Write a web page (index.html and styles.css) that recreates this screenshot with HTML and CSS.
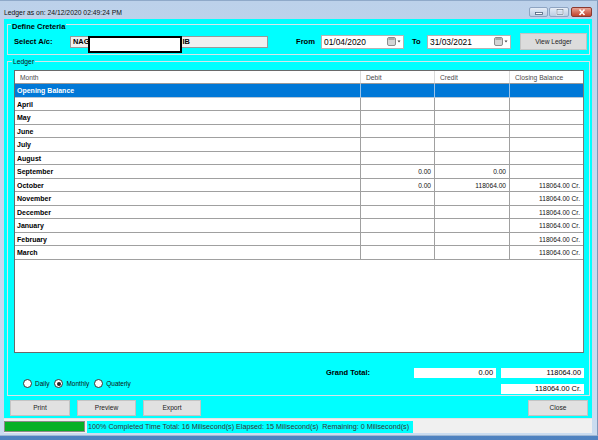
FILE: index.html
```html
<!DOCTYPE html>
<html>
<head>
<meta charset="utf-8">
<link rel="stylesheet" href="styles.css">
</head>
<body>
<div class="window">
  <div class="titlebar">
    <span class="title">Ledger as on: 24/12/2020 02:49:24 PM</span>
    <div class="controls">
      <span class="cbtn min"><svg width="18" height="9" viewBox="0 0 18 9"><rect x="5.5" y="4.5" width="7" height="2" fill="#fff" stroke="#4a5f7a" stroke-width="0.8"/></svg></span>
      <span class="cbtn max"><svg width="20" height="9" viewBox="0 0 20 9"><rect x="7" y="1.5" width="6" height="5" fill="none" stroke="#fff" stroke-width="1.6"/><rect x="7" y="1.5" width="6" height="5" fill="none" stroke="#4a5f7a" stroke-width="0.6"/></svg></span>
      <span class="cbtn close"><svg width="20" height="9" viewBox="0 0 20 9"><path d="M7.5 1.5 L12.5 7 M12.5 1.5 L7.5 7" stroke="#fff" stroke-width="1.6"/></svg></span>
    </div>
  </div>
  <div class="client">
    <div class="group criteria">
      <span class="legend bold">Define Creteria</span>
      <div class="crow">
        <span class="lbl sel">Select A/c:</span>
        <div class="acbox"><span class="ac1">NAG</span><span class="ac2">IB</span><span class="redact"></span></div>
        <span class="lbl from">From</span>
        <div class="date"><span class="dtext">01/04/2020</span><svg class="cal" width="15" height="9" viewBox="0 0 15 9"><rect x="0.5" y="0.5" width="8" height="8" rx="1.5" fill="#d4d4d4" stroke="#8c8c8c"/><rect x="1.5" y="1" width="6" height="2" fill="#a8a8a8"/><path d="M10.5 3.5 L13.5 3.5 L12 5.5 Z" fill="#444"/></svg></div>
        <span class="lbl to">To</span>
        <div class="date d2"><span class="dtext">31/03/2021</span><svg class="cal" width="15" height="9" viewBox="0 0 15 9"><rect x="0.5" y="0.5" width="8" height="8" rx="1.5" fill="#d4d4d4" stroke="#8c8c8c"/><rect x="1.5" y="1" width="6" height="2" fill="#a8a8a8"/><path d="M10.5 3.5 L13.5 3.5 L12 5.5 Z" fill="#444"/></svg></div>
        <button class="btn view">View Ledger</button>
      </div>
    </div>

    <div class="group ledger">
      <span class="legend">Ledger</span>
      <div class="grid">
        <div class="row head"><div class="c">Month</div><div class="c">Debit</div><div class="c">Credit</div><div class="c">Closing Balance</div></div>
        <div class="row sel"><div class="c m">Opening Balance</div><div class="c n"></div><div class="c n"></div><div class="c n"></div></div>
        <div class="row"><div class="c m">April</div><div class="c n"></div><div class="c n"></div><div class="c n"></div></div>
        <div class="row"><div class="c m">May</div><div class="c n"></div><div class="c n"></div><div class="c n"></div></div>
        <div class="row"><div class="c m">June</div><div class="c n"></div><div class="c n"></div><div class="c n"></div></div>
        <div class="row"><div class="c m">July</div><div class="c n"></div><div class="c n"></div><div class="c n"></div></div>
        <div class="row"><div class="c m">August</div><div class="c n"></div><div class="c n"></div><div class="c n"></div></div>
        <div class="row"><div class="c m">September</div><div class="c n">0.00</div><div class="c n">0.00</div><div class="c n"></div></div>
        <div class="row"><div class="c m">October</div><div class="c n">0.00</div><div class="c n">118064.00</div><div class="c n">118064.00 Cr.</div></div>
        <div class="row"><div class="c m">November</div><div class="c n"></div><div class="c n"></div><div class="c n">118064.00 Cr.</div></div>
        <div class="row"><div class="c m">December</div><div class="c n"></div><div class="c n"></div><div class="c n">118064.00 Cr.</div></div>
        <div class="row"><div class="c m">January</div><div class="c n"></div><div class="c n"></div><div class="c n">118064.00 Cr.</div></div>
        <div class="row"><div class="c m">February</div><div class="c n"></div><div class="c n"></div><div class="c n">118064.00 Cr.</div></div>
        <div class="row"><div class="c m">March</div><div class="c n"></div><div class="c n"></div><div class="c n">118064.00 Cr.</div></div>
      </div>
      <div class="footer">
        <div class="radios">
          <span class="ropt"><span class="radio"></span>Daily</span>
          <span class="ropt"><span class="radio on"></span>Monthly</span>
          <span class="ropt"><span class="radio"></span>Quaterly</span>
        </div>
        <div class="gtlabel bold">Grand Total:</div>
        <div class="tbox">0.00</div>
        <div class="tbox">118064.00</div>
        <div class="tbox cr">118064.00 Cr.</div>
      </div>
    </div>

    <div class="buttons">
      <button class="btn b-print">Print</button>
      <button class="btn b-preview">Preview</button>
      <button class="btn b-export">Export</button>
      <button class="btn b-close">Close</button>
    </div>

    <div class="status">
      <div class="progress"><div class="fill"></div></div>
      <div class="stext">100% Completed Time Total: 16 Milisecond(s) Elapsed: 15 Milisecond(s)  Remaining: 0 Milisecond(s)</div>
    </div>
  </div>
</div>
</body>
</html>
```
FILE: styles.css
```css
* { box-sizing: border-box; }
html, body { margin: 0; padding: 0; }
body {
  width: 598px;
  height: 440px;
  overflow: hidden;
  background: linear-gradient(180deg, #7fa9d8 0%, #4f82c0 100%);
  font-family: "Liberation Sans", Arial, sans-serif;
  color: #000;
}
.bold { font-weight: bold; }

.window {
  width: 598px;
  height: 436px;
  padding: 0 5px 0 4px;
  background: linear-gradient(180deg, #bcd1ea 0%, #c8daef 40%, #cadcf0 100%);
  border-top: 1px solid #8fa9c9;
  border-bottom: 1px solid #9fb7d3;
  border-right: 1px solid #7d98bb;
  display: flex;
  flex-direction: column;
}

.titlebar {
  height: 18px;
  display: flex;
  align-items: flex-start;
}
.title {
  font-size: 6.8px;
  line-height: 12px;
  margin-top: 6px;
  color: #111;
}
.controls {
  margin-left: auto;
  display: flex;
  margin-top: 6px;
  height: 10px;
}
.cbtn {
  display: block;
  height: 10px;
  border: 1px solid #8ea4c2;
  border-radius: 2px;
  background: linear-gradient(180deg, #e6eef7 0%, #d0dced 50%, #bccde2 100%);
  overflow: hidden;
}
.cbtn svg { display: block; }
.cbtn.min { width: 19px; }
.cbtn.max { width: 20px; margin-left: 1px; }
.cbtn.close {
  width: 21px;
  margin-left: 2px;
  border-color: #8a3a30;
  background: linear-gradient(180deg, #e9a597 0%, #d4705e 50%, #c0432f 100%);
}

.client {
  height: 414px;
  background: #00ffff;
  display: flex;
  flex-direction: column;
}

.group {
  position: relative;
  border: 1px solid #d9e4e8;
  margin-left: 3px;
  width: 583px;
}
.legend {
  position: absolute;
  background: #00ffff;
  line-height: 9px;
  padding: 0 1px;
}
.criteria {
  margin-top: 5px;
  height: 31px;
  padding: 8px 0 4px 6px;
}
.criteria .legend {
  left: 3px;
  top: -3.5px;
  font-size: 7.5px;
}
.crow {
  display: flex;
  align-items: center;
  height: 17px;
}
.lbl {
  font-weight: bold;
  font-size: 7.6px;
  line-height: 10px;
}
.lbl.sel { width: 56px; }
.acbox {
  position: relative;
  width: 198px;
  height: 12px;
  background: #f0f0f0;
  border: 1px solid #9a9a9a;
  font-size: 7.4px;
  font-weight: bold;
  line-height: 10px;
  padding-left: 2px;
  display: flex;
}
.ac2 { margin-left: 93px; }
.redact {
  position: absolute;
  left: 17px;
  top: -1px;
  width: 94px;
  height: 17px;
  background: #fff;
  border: 2px solid #000;
}
.lbl.from { margin-left: 28px; width: 25px; }
.date {
  width: 83px;
  height: 14px;
  background: #fff;
  border: 1px solid #b4b4b4;
  display: flex;
  align-items: center;
  padding: 0 1px 0 2px;
}
.date.d2 { width: 84px; }
.dtext {
  font-size: 8.4px;
  line-height: 12px;
}
.cal { margin-left: auto; display: block; }
.lbl.to { margin-left: 8px; width: 15px; }

.btn {
  font-family: "Liberation Sans", Arial, sans-serif;
  font-size: 6.6px;
  color: #222;
  background: #e1e1e1;
  border: 1px solid #c4c4c4;
  padding: 0;
  margin: 0;
  height: 16px;
  line-height: 14px;
  text-align: center;
}
.btn.view {
  margin-left: 9px;
  width: 67px;
  height: 17px;
  background: #dcdcdc;
}

.ledger {
  margin-top: 6px;
  height: 335px;
  padding: 8px 5px 0 6px;
  display: flex;
  flex-direction: column;
}
.ledger .legend {
  left: 4px;
  top: -5px;
  font-size: 6.8px;
  color: #111;
}

.grid {
  width: 570px;
  height: 283px;
  background: #fff;
  border: 1px solid #6a6a6a;
  border-right-color: #7a7a7a;
}
.row {
  display: grid;
  grid-template-columns: 346px 74px 75px 73px;
  height: 13.54px;
}
.row .c {
  border-right: 1px solid #a0a0a0;
  border-bottom: 1px solid #a0a0a0;
  overflow: hidden;
  white-space: nowrap;
  line-height: 13px;
}
.row .c:last-child { border-right: none; }
.row.head { height: 13px; }
.row.head .c {
  font-size: 6.7px;
  color: #4a4a4a;
  padding-left: 5px;
  border-right-color: #dadada;
  border-bottom-color: #9a9a9a;
  line-height: 13px;
}
.row .m {
  font-size: 7px;
  font-weight: bold;
  padding-left: 2px;
}
.row .n {
  font-size: 6.6px;
  text-align: right;
  padding-right: 3px;
  color: #111;
}
.row.sel { background: #0078d7; }
.row.sel .c {
  color: #fff;
  border-right-color: #9cc3e8;
  border-bottom-color: #b8c8d8;
}

.footer {
  height: 42px;
  display: grid;
  grid-template-columns: 1fr 87px 82px 83px;
  grid-template-rows: 10px 10px;
  column-gap: 5px;
  row-gap: 6px;
  padding-top: 15px;
}
.radios {
  grid-column: 1;
  grid-row: 1 / 3;
  align-self: end;
  margin-bottom: 6px;
  margin-left: 9px;
  display: flex;
  align-items: center;
  font-size: 6.5px;
  line-height: 9px;
  color: #111;
}
.ropt {
  display: flex;
  align-items: center;
  margin-right: 5px;
}
.radio {
  width: 9px;
  height: 9px;
  border-radius: 50%;
  border: 1px solid #333;
  background: #fff;
  margin-right: 3px;
  display: flex;
  align-items: center;
  justify-content: center;
}
.radio.on::after {
  content: "";
  width: 4px;
  height: 4px;
  border-radius: 50%;
  background: #222;
}
.gtlabel {
  grid-column: 2;
  grid-row: 1;
  font-size: 7.5px;
  line-height: 10px;
  padding-left: 4px;
}
.tbox {
  grid-row: 1;
  background: #fff;
  font-size: 7.4px;
  line-height: 10px;
  text-align: right;
  padding-right: 3px;
}
.tbox.cr { grid-column: 4; grid-row: 2; }

.buttons {
  margin-top: 4px;
  height: 16px;
  display: flex;
  padding-left: 6px;
  padding-right: 4px;
}
.b-print { width: 60px; }
.b-preview { width: 59px; margin-left: 7px; }
.b-export { width: 58px; margin-left: 7px; }
.b-close { width: 60px; margin-left: auto; }

.status {
  margin-top: 2px;
  height: 15px;
  background: #f0f0f0;
  border-top: 1px solid #e4e4e4;
  display: flex;
  align-items: center;
  padding-top: 1px;
}
.progress {
  width: 81px;
  height: 11px;
  border: 1px solid #8a8a8a;
  background: #e6e6e6;
}
.fill { width: 100%; height: 100%; background: #06b025; }
.stext {
  margin-left: 2px;
  width: 326px;
  height: 12px;
  background: #00ffff;
  font-size: 7.2px;
  line-height: 12px;
  padding-left: 1px;
  color: #333;
  white-space: pre;
  overflow: hidden;
}
```
